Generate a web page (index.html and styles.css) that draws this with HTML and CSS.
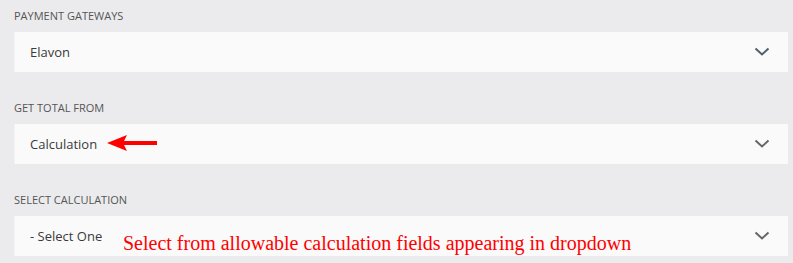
FILE: index.html
```html
<!DOCTYPE html>
<html>
<head>
<meta charset="utf-8">
<link rel="stylesheet" href="styles.css">
</head>
<body>
<div class="form">
  <div class="field">
    <div class="label">PAYMENT GATEWAYS</div>
    <div class="select">
      <span class="value">Elavon</span>
      <svg class="chev chev-blue" width="16" height="9" viewBox="0 0 16 9"><path d="M1.5 1.5 L8 7.5 L14.5 1.5" fill="none" stroke="currentColor" stroke-width="2"/></svg>
    </div>
  </div>
  <div class="field">
    <div class="label">GET TOTAL FROM</div>
    <div class="select">
      <span class="value">Calculation</span>
      <svg class="chev" width="16" height="9" viewBox="0 0 16 9"><path d="M1.5 1.5 L8 7.5 L14.5 1.5" fill="none" stroke="currentColor" stroke-width="2"/></svg>
      <svg class="arrow" width="52" height="16" viewBox="0 0 52 16"><polygon points="0,8 20,0 17,6 50,6 50,10 17,10 20,16" fill="#ff0000"/></svg>
    </div>
  </div>
  <div class="field">
    <div class="label">SELECT CALCULATION</div>
    <div class="select">
      <span class="value">- Select One</span>
      <svg class="chev" width="16" height="9" viewBox="0 0 16 9"><path d="M1.5 1.5 L8 7.5 L14.5 1.5" fill="none" stroke="currentColor" stroke-width="2"/></svg>
      <div class="note">Select from allowable calculation fields appearing in dropdown</div>
    </div>
  </div>
</div>
</body>
</html>
```
FILE: styles.css
```css
html, body {
  margin: 0;
  padding: 0;
  background: #ebebed;
  overflow: hidden;
}
.form {
  display: flex;
  flex-direction: column;
  gap: 28px;
  padding: 8px 5px 0 14px;
  font-family: "Open Sans", "Noto Sans", sans-serif;
}
.field {
  display: flex;
  flex-direction: column;
}
.label {
  font-size: 11px;
  line-height: 16px;
  color: #555;
  margin-bottom: 8px;
}
.select {
  position: relative;
  height: 40px;
  box-sizing: border-box;
  background: #fafafa;
  border-left: 1px solid #f2f2f2;
  display: flex;
  align-items: center;
  justify-content: space-between;
  padding: 0 18px 0 15px;
}
.value {
  font-size: 13px;
  color: #3a3a3a;
}
.chev {
  color: #666;
  margin-top: -2px;
}
.chev-blue {
  color: #4e5e6e;
}
.arrow {
  position: absolute;
  left: 92px;
  top: 11px;
}
.note {
  position: absolute;
  left: 108px;
  top: 17px;
  font-family: "Liberation Serif", "Times New Roman", serif;
  font-size: 20px;
  line-height: 20px;
  color: #ff0000;
  white-space: nowrap;
}
```
